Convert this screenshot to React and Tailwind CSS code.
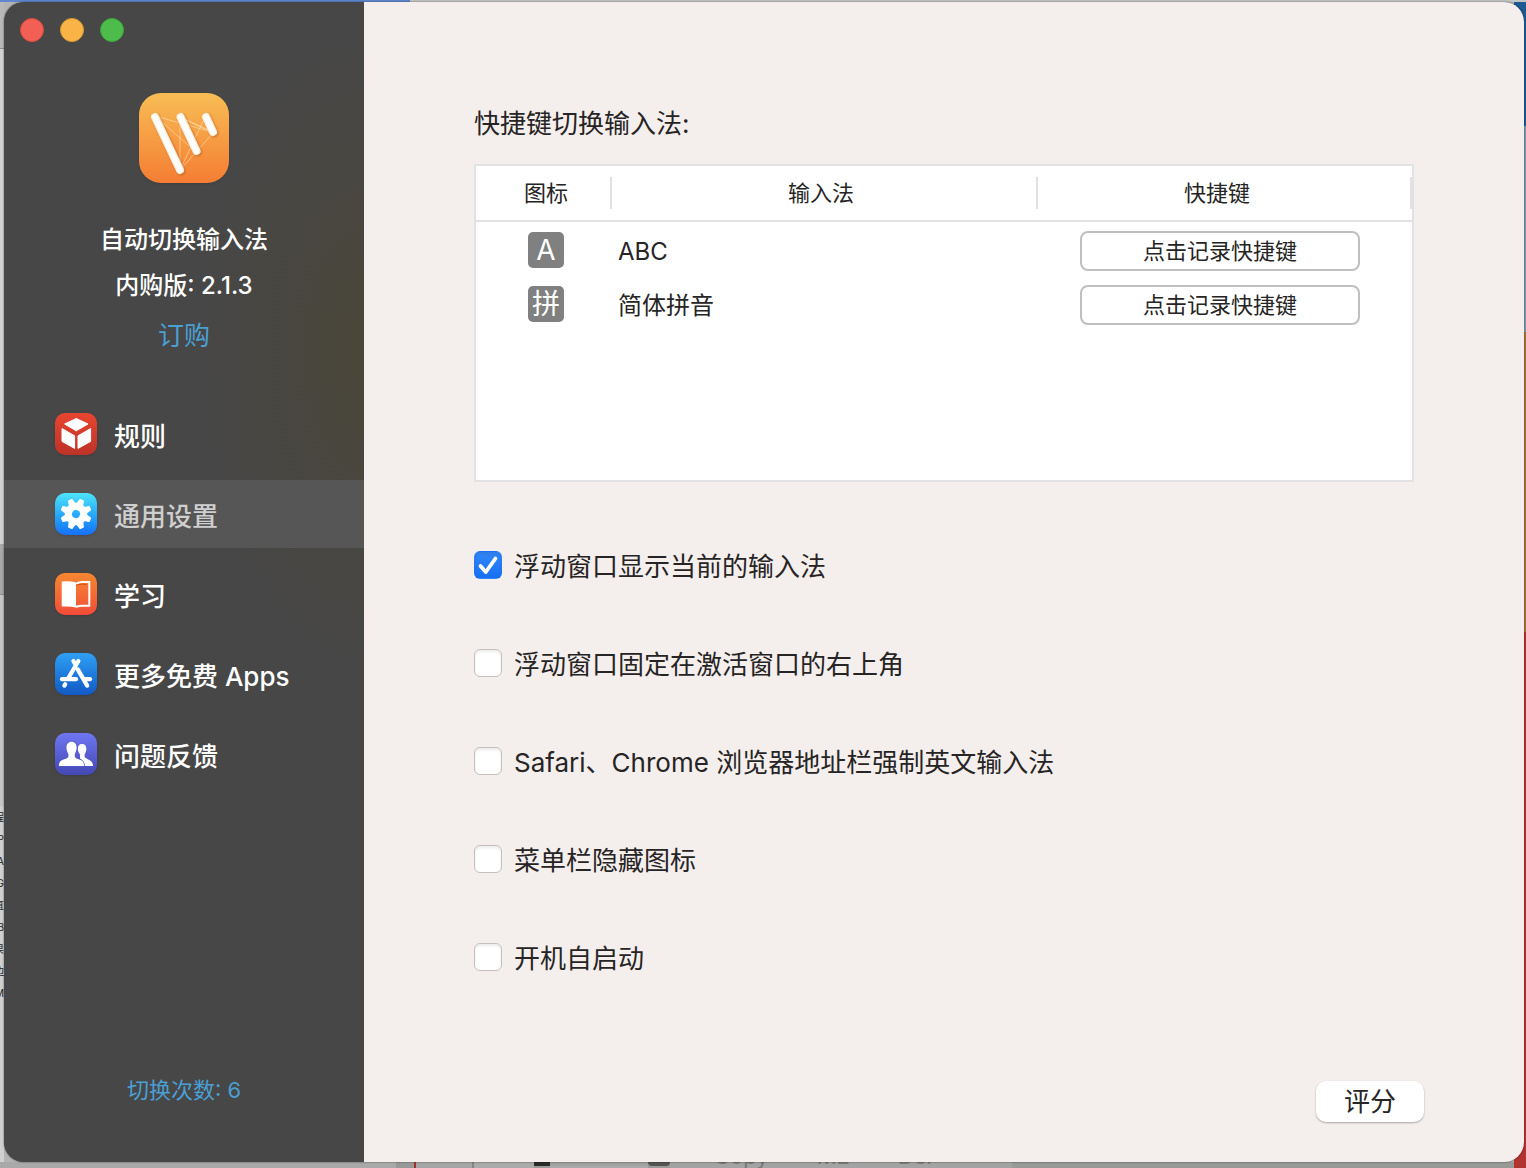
import React, { useState } from "react";

const RulesIcon = () => (
  <svg width="42" height="42" viewBox="0 0 42 42" aria-hidden="true">
    <g fill="#fff" stroke="#fff" strokeWidth="1" strokeLinejoin="round">
      <path d="M21.3 5.5 33 11 21.3 17.8 9.6 11Z" />
      <path d="M7 15.600 19.600 22.800V35.400L7 28.400Z" />
      <path d="M35.600 15.600 23 22.800V35.400L35.600 28.400Z" />
    </g>
  </svg>
);

const GearIcon = () => (
  <svg width="42" height="42" viewBox="0 0 42 42" aria-hidden="true">
    <g fill="#fff" transform="rotate(22.5 21 21)">
      {[0, 45, 90, 135, 180, 225, 270, 315].map((angle) => (
        <path
          key={angle}
          d="M16.4 11.600Q18 10.400 18.500 6.400Q18.600 5.500 19.500 5.400H22.500Q23.400 5.500 23.500 6.400Q24 10.400 25.600 11.600Z"
          transform={`rotate(${angle} 21 21)`}
        />
      ))}
      <circle cx="21" cy="21" r="7.400" fill="none" stroke="#fff" strokeWidth="6.800" />
    </g>
  </svg>
);

const BookIcon = () => (
  <svg width="42" height="42" viewBox="0 0 42 42" aria-hidden="true">
    <path d="M6.700 8.600Q14 7.400 21 9.400V34.400Q14 33 6.700 33.600Z" fill="#fff" />
    <path d="M21 11Q24 8.600 28 9H34.300V32.800H28Q24 32.600 21 34" fill="none" stroke="#fff" strokeWidth="2" />
    <path d="M21 12.400Q24 10.600 31.600 11.400" fill="none" stroke="#d9471f" strokeWidth="1" />
  </svg>
);

const StoreIcon = () => (
  <svg width="42" height="42" viewBox="0 0 42 42" aria-hidden="true">
    <g fill="none" stroke="#fff" strokeWidth="4.200" strokeLinecap="round">
      <path d="M18.400 8 20 10.800" />
      <path d="M23.400 8 13.400 25" />
      <path d="M10.200 31.200 9.400 32.600" />
      <path d="M22.800 16.400 32.200 32.600" />
      <path d="M7 26.200H21" />
      <path d="M30 26.200H35" />
    </g>
  </svg>
);

const PeopleIcon = () => (
  <svg width="42" height="42" viewBox="0 0 42 42" aria-hidden="true">
    <g fill="#fff">
      <path d="M27 11C30.200 11 31.600 13.400 31.300 16.600 31 19.200 30.200 20.400 29.600 21.600V23.600C30.200 26.600 38 26.200 38 33H28C28 28.400 26.600 27 25 25.600V21.400C23.600 19.600 22.800 18 22.900 16 22.900 13 24 11 27 11Z" />
      <path
        d="M16.500 8.800C20.200 8.800 21.800 11.600 21.600 15 21.400 18 20.400 19.600 19.800 21V23.400C20.200 25.600 23.400 25.800 25.800 27 28.200 28.200 29 29.800 29 33H4C4 29.800 4.800 28.200 7.200 27 9.600 25.800 12.800 25.600 13.400 23.400V21C12.600 19.600 11.600 18 11.400 15 11.200 11.600 13 8.800 16.500 8.800Z"
        stroke="#5458c8"
        strokeWidth="1.600"
        paintOrder="stroke"
      />
    </g>
  </svg>
);

const AppLogo = () => (
  <svg className="rounded-[22px] shadow-sm" width="90" height="90" viewBox="0 0 90 90" aria-hidden="true">
    <defs>
      <linearGradient id="logo-bg" x1="0" y1="0" x2="0" y2="1">
        <stop offset="0" stopColor="#f9bd55" />
        <stop offset="1" stopColor="#f47d33" />
      </linearGradient>
      <filter id="logo-shadow" x="-20%" y="-20%" width="140%" height="140%">
        <feDropShadow dx="1" dy="1" stdDeviation="1" floodColor="#a04a10" floodOpacity="0.6" />
      </filter>
    </defs>
    <rect width="90" height="90" fill="url(#logo-bg)" />
    <path
      d="M16 23 73 39M16 23 57 59M41 24V77M41 24 74 40M41 77 66 24M41 77 74 40M41 24 74 39"
      fill="none"
      stroke="#fde0b4"
      strokeWidth="0.6"
    />
    <g stroke="#fdecd6" strokeWidth="8" strokeLinecap="round" filter="url(#logo-shadow)">
      <path d="M16 24 41 77" />
      <path d="M41.500 24 57.500 58" />
      <path d="M67 24 74 39" />
    </g>
    <g stroke="#fff" strokeWidth="5.500" strokeLinecap="round">
      <path d="M16 24 41 77" />
      <path d="M41.500 24 57.500 58" />
      <path d="M67 24 74 39" />
    </g>
  </svg>
);

const menuItems = [
  { label: "规则", icon: RulesIcon, tile: "from-[#e8452f] to-[#bd3328]" },
  { label: "通用设置", icon: GearIcon, tile: "from-[#4ee3fa] to-[#1a6ff5]" },
  { label: "学习", icon: BookIcon, tile: "from-[#f6872f] to-[#f14a38]" },
  { label: "更多免费 Apps", icon: StoreIcon, tile: "from-[#2fa0f5] to-[#1459c4]" },
  { label: "问题反馈", icon: PeopleIcon, tile: "from-[#7076f2] to-[#4348b4]" },
];

const inputMethods = [
  { glyph: "A", name: "ABC" },
  { glyph: "拼", name: "简体拼音" },
];

const options = [
  { id: "float", label: "浮动窗口显示当前的输入法", checked: true },
  { id: "pin", label: "浮动窗口固定在激活窗口的右上角", checked: false },
  { id: "browser", label: "Safari、Chrome 浏览器地址栏强制英文输入法", checked: false },
  { id: "menubar", label: "菜单栏隐藏图标", checked: false },
  { id: "startup", label: "开机自启动", checked: false },
];

// other windows peeking out around the edges
const Desktop = () => (
  <div className="absolute inset-0 flex flex-col bg-[#b4b4b4]" aria-hidden="true">
    <div className="flex h-[2px]">
      <div className="w-[410px] bg-[#5f87cf]" />
      <div className="flex-1 bg-[#c4c4c4]" />
    </div>
    <div className="flex flex-1">
      <div className="flex w-1 flex-col overflow-hidden">
        <div className="h-[46px] bg-[#b9b9b9]" />
        <div className="h-[496px] border-t border-[#8f8f8f] bg-[#d2d2d2]" />
        <div className="h-[50px] bg-[#a8a8a8]" />
        <div className="h-[212px] border-t border-[#909090] bg-[#c6c6c6]" />
        <div className="flex flex-1 flex-col items-end bg-[#d0d0d0] text-[10px] leading-[22px] text-[#222]">
          <span>程</span>
          <span>P</span>
          <span>A</span>
          <span>G</span>
          <span>直</span>
          <span>B</span>
          <span>果</span>
          <span>边</span>
          <span>M</span>
        </div>
      </div>
      <div className="flex-1" />
      <div className="flex w-3 flex-col">
        <div className="h-[124px] bg-[#1d5a92]" />
        <div className="h-[206px] bg-[#8198a8]" />
        <div className="h-[300px] bg-[#a87435]" />
        <div className="flex-1 bg-[#b23431]" />
      </div>
    </div>
    <div className="flex h-[6px] overflow-hidden bg-[#979a96]">
      <div className="w-[396px] bg-[#a9a9a9]" />
      <div className="w-[18px] bg-[#989898]" />
      <div className="w-[2px] bg-[#9c3526]" />
      <div className="w-[56px] bg-[#a6a6a6]" />
      <div className="w-[2px] bg-[#858585]" />
      <div className="w-[60px] bg-[#ababab]" />
      <div className="h-1 w-[16px] bg-[#2b2b2b]" />
      <div className="w-[98px] border-b-2 border-[#ababab] bg-[#a2a2a2]" />
      <div className="h-1 w-[22px] rounded-b-full bg-[#555]" />
      <div className="flex w-[342px] items-end gap-12 bg-[#a3a3a3] pl-11 text-[22px] leading-6 text-[#7a7a7a]">
        <span>Copy</span>
        <span>ME</span>
        <span>Del</span>
      </div>
      <div className="flex-1" />
      <div className="w-3 bg-[#b23431]" />
    </div>
  </div>
);

const Sidebar = () => (
  <aside className="flex w-[360px] shrink-0 flex-col items-center bg-[#474747] bg-[radial-gradient(ellipse_160px_320px_at_100%_30%,#4a4639,#474747)] text-white">
    <div className="flex gap-4 self-start pt-4 pl-4">
      <button aria-label="关闭" className="size-6 rounded-full border border-[#dd4a40] bg-[#f25f55]" />
      <button aria-label="最小化" className="size-6 rounded-full border border-[#dd9a33] bg-[#f9b445]" />
      <button aria-label="缩放" className="size-6 rounded-full border border-[#3ba63a] bg-[#4dbc4b]" />
    </div>

    <div className="flex flex-col items-center pt-[51px]">
      <AppLogo />
      <h1 className="mt-9 text-[24px] leading-[42px] font-medium">自动切换输入法</h1>
      <p className="mt-1 text-[24px] leading-[42px] font-medium">内购版: 2.1.3</p>
      <a href="#" className="mt-2 text-[26px] leading-[42px] text-[#4a9fd4]">
        订购
      </a>
    </div>

    <nav className="mt-[43px] flex w-full flex-col gap-3">
      {menuItems.map(({ label, icon: Icon, tile }) => {
        const active = label === "通用设置";
        return (
          <a
            key={label}
            href="#"
            aria-current={active ? "page" : undefined}
            className={`flex h-[68px] items-center gap-[17px] pl-[51px] text-[26px] font-medium ${active ? "bg-[#565656] text-[#cfcfcf]" : ""}`}
          >
            <span className={`rounded-[10px] bg-linear-to-b shadow-sm ${tile}`}>
              <Icon />
            </span>
            <span className="pt-1">{label}</span>
          </a>
        );
      })}
    </nav>

    <p className="mt-auto pb-[52px] text-[22px] leading-10 text-[#4a9fd4]">切换次数: 6</p>
  </aside>
);

const ShortcutTable = () => (
  <div className="mt-5 h-[318px] border-2 border-[#e2e1e3] bg-white">
    <table className="w-full table-fixed border-separate border-spacing-0">
      <colgroup>
        <col className="w-[136px]" />
        <col />
        <col className="w-[374px]" />
      </colgroup>
      <thead>
        <tr className="text-[22px] leading-8">
          <th className="h-14 border-b-2 border-[#e2e1e3] p-0 font-normal">
            <div className="border-r-2 border-[#e2e1e3] pl-[6px]">图标</div>
          </th>
          <th className="h-14 border-b-2 border-[#e2e1e3] p-0 font-normal">
            <div className="border-r-2 border-[#e2e1e3] pr-[6px]">输入法</div>
          </th>
          <th className="h-14 border-b-2 border-[#e2e1e3] p-0 font-normal">
            <div className="border-r-2 border-[#e2e1e3] pr-[14px]">快捷键</div>
          </th>
        </tr>
      </thead>
      <tbody>
        {inputMethods.map(({ glyph, name }) => (
          <tr key={name} className="h-[54px]">
            <td className="p-0 pt-[2px] pl-1">
              <span className="mx-auto flex size-9 items-center justify-center rounded-[5px] bg-[#808080] text-[28px] leading-9 text-white">
                {glyph}
              </span>
            </td>
            <td className="p-0 pt-[6px] pl-[6px] text-[24px] leading-9">{name}</td>
            <td className="p-0 pt-1 pl-[42px]">
              <button className="block h-10 w-[280px] rounded-lg border-2 border-[#bfbfbf] bg-white text-[22px] leading-9">
                点击记录快捷键
              </button>
            </td>
          </tr>
        ))}
      </tbody>
    </table>
  </div>
);

const Option = ({ id, label, checked }) => {
  const [on, setOn] = useState(checked);
  return (
    <div className="flex h-7 items-center gap-3">
      <span className="relative size-7 shrink-0">
        <input
          id={id}
          type="checkbox"
          checked={on}
          onChange={() => setOn(!on)}
          className="block size-7 appearance-none rounded-md border border-[#c4c0be] bg-white shadow-[inset_0_2px_3px_rgba(0,0,0,0.08)] checked:border-transparent checked:bg-[#1f78f6] checked:bg-linear-to-b checked:from-[#3287f7] checked:to-[#1670f5]"
        />
        {on && (
          <svg className="pointer-events-none absolute inset-0" width="28" height="28" viewBox="0 0 28 28" aria-hidden="true">
            <path d="M6.500 15 11.800 21 21.500 7.500" fill="none" stroke="#fff" strokeWidth="3.800" strokeLinecap="round" strokeLinejoin="round" />
          </svg>
        )}
      </span>
      <label htmlFor={id} className="pt-1 text-[26px] leading-9">
        {label}
      </label>
    </div>
  );
};

const App = () => {
  return (
    <div className="relative flex min-h-screen pt-[2px] pr-[2px] pb-[6px] pl-1 font-['Inter','Noto_Sans_CJK_SC',sans-serif] text-[#262424]">
      <Desktop />
      <div className="relative flex flex-1 overflow-hidden rounded-[20px] bg-[#f4eeec] shadow-[0_0_2px_rgba(0,0,0,0.6)]">
        <Sidebar />
        <main className="flex flex-1 flex-col px-[110px] pt-[102px]">
          <h2 className="text-[26px] leading-10">快捷键切换输入法:</h2>
          <ShortcutTable />
          <div className="mt-[69px] flex flex-col gap-[70px]">
            {options.map((option) => (
              <Option key={option.id} {...option} />
            ))}
          </div>
          <button className="mt-auto -mr-[10px] mb-10 h-[41px] w-[108px] self-end rounded-[10px] bg-white text-[26px] leading-10 shadow-[0_1px_2px_rgba(0,0,0,0.3)]">
            评分
          </button>
        </main>
      </div>
    </div>
  );
};

export default App;
